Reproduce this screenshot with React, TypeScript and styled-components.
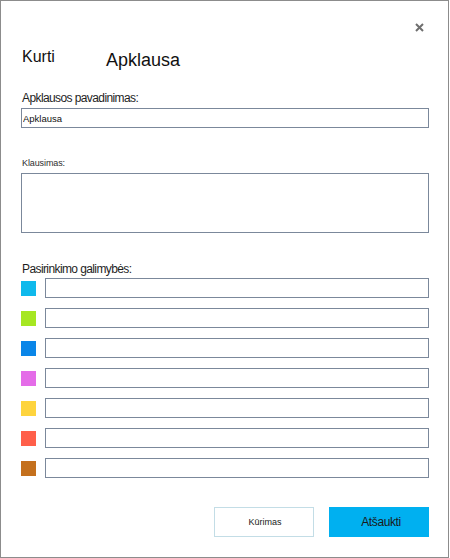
import React from 'react';
import styled, { createGlobalStyle } from 'styled-components';

const GlobalStyle = createGlobalStyle`
  html, body {
    margin: 0;
    padding: 0;
    background: #ffffff;
  }
  body {
    font-family: "Liberation Sans", Arial, sans-serif;
    color: #1a1a1a;
  }
`;

const Dialog = styled.div`
  position: relative;
  box-sizing: border-box;
  width: 449px;
  height: 558px;
  border: 1px solid #8c8c8c;
  background: #ffffff;
  padding: 46px 19px 0 20px;
  display: flex;
  flex-direction: column;
`;

const CloseButton = styled.button`
  position: absolute;
  top: 20px;
  left: 412px;
  width: 12px;
  height: 12px;
  padding: 0;
  border: none;
  background: none;
  cursor: pointer;
  display: flex;
  align-items: center;
  justify-content: center;
`;

const Header = styled.div`
  display: flex;
  align-items: flex-start;
  height: 24px;
`;

const HeaderAction = styled.div`
  width: 85px;
  font-size: 16px;
  line-height: 20px;
  padding-left: 1px;
  box-sizing: border-box;
  color: #111;
`;

const HeaderTitle = styled.div`
  margin-top: 2px;
  font-size: 18px;
  line-height: 22px;
  color: #111;
`;

const Label = styled.label<{ small?: boolean; gap: number }>`
  display: block;
  margin-top: ${p => p.gap}px;
  padding-left: 1px;
  font-size: ${p => (p.small ? 9 : 12)}px;
  line-height: ${p => (p.small ? 11 : 14)}px;
  letter-spacing: ${p => (p.small ? -0.1 : -0.6)}px;
  color: ${p => (p.small ? '#2e2e2e' : '#1e1e1e')};
`;

const TextInput = styled.input`
  display: block;
  box-sizing: border-box;
  width: 100%;
  height: 20px;
  margin: 3px 0 0;
  padding: 0 1px;
  border: 1px solid #7b889b;
  border-radius: 0;
  font-family: inherit;
  font-size: 9.5px;
  color: #111;
  outline: none;
`;

const QuestionArea = styled.textarea`
  display: block;
  box-sizing: border-box;
  width: 100%;
  height: 60px;
  margin: 4px 0 0;
  padding: 2px;
  border: 1px solid #7b889b;
  border-radius: 0;
  resize: none;
  font-family: inherit;
  font-size: 10px;
  outline: none;
`;

const OptionList = styled.div`
  display: flex;
  flex-direction: column;
  gap: 10px;
  margin-top: 2px;
`;

const OptionRow = styled.div`
  display: flex;
  align-items: center;
  gap: 9px;
  height: 20px;
`;

const Swatch = styled.span<{ color: string }>`
  flex: 0 0 15px;
  width: 15px;
  height: 15px;
  background: ${p => p.color};
`;

const OptionInput = styled.input`
  flex: 1;
  box-sizing: border-box;
  height: 20px;
  margin: 0;
  padding: 0 2px;
  border: 1px solid #7b889b;
  border-radius: 0;
  font-family: inherit;
  font-size: 10px;
  outline: none;
`;

const Footer = styled.div`
  display: flex;
  justify-content: flex-end;
  gap: 15px;
  margin-top: 29px;
`;

const FooterButton = styled.button<{ primary?: boolean }>`
  box-sizing: border-box;
  width: 100px;
  height: 30px;
  margin: 0;
  border: 1px solid ${p => (p.primary ? '#00b0f0' : '#c3dde6')};
  border-radius: 0;
  background: ${p => (p.primary ? '#00b0f0' : '#ffffff')};
  font-family: inherit;
  font-size: ${p => (p.primary ? 12 : 9)}px;
  letter-spacing: ${p => (p.primary ? -0.4 : 0)}px;
  padding: 0 0 0 ${p => (p.primary ? 4 : 2)}px;
  color: #1a1a1a;
  cursor: pointer;
`;

const optionColors = [
  '#0fb9ec',
  '#a6e722',
  '#0a86e8',
  '#e46ce8',
  '#fed43e',
  '#ff5f4a',
  '#c4701d',
];

const App: React.FC = () => {
  return (
    <>
      <GlobalStyle />
      <Dialog>
        <CloseButton aria-label="Uždaryti">
          <svg width="9" height="9" viewBox="0 0 9 9">
            <path d="M1 1 L8 8 M8 1 L1 8" stroke="#6f6f6f" strokeWidth="2" />
          </svg>
        </CloseButton>
        <Header>
          <HeaderAction>Kurti</HeaderAction>
          <HeaderTitle>Apklausa</HeaderTitle>
        </Header>

        <Label gap={20}>Apklausos pavadinimas:</Label>
        <TextInput defaultValue="Apklausa" />

        <Label small gap={30}>Klausimas:</Label>
        <QuestionArea />

        <Label gap={29}>Pasirinkimo galimybės:</Label>
        <OptionList>
          {optionColors.map(color => (
            <OptionRow key={color}>
              <Swatch color={color} />
              <OptionInput />
            </OptionRow>
          ))}
        </OptionList>

        <Footer>
          <FooterButton>Kūrimas</FooterButton>
          <FooterButton primary>Atšaukti</FooterButton>
        </Footer>
      </Dialog>
    </>
  );
};

export default App;
